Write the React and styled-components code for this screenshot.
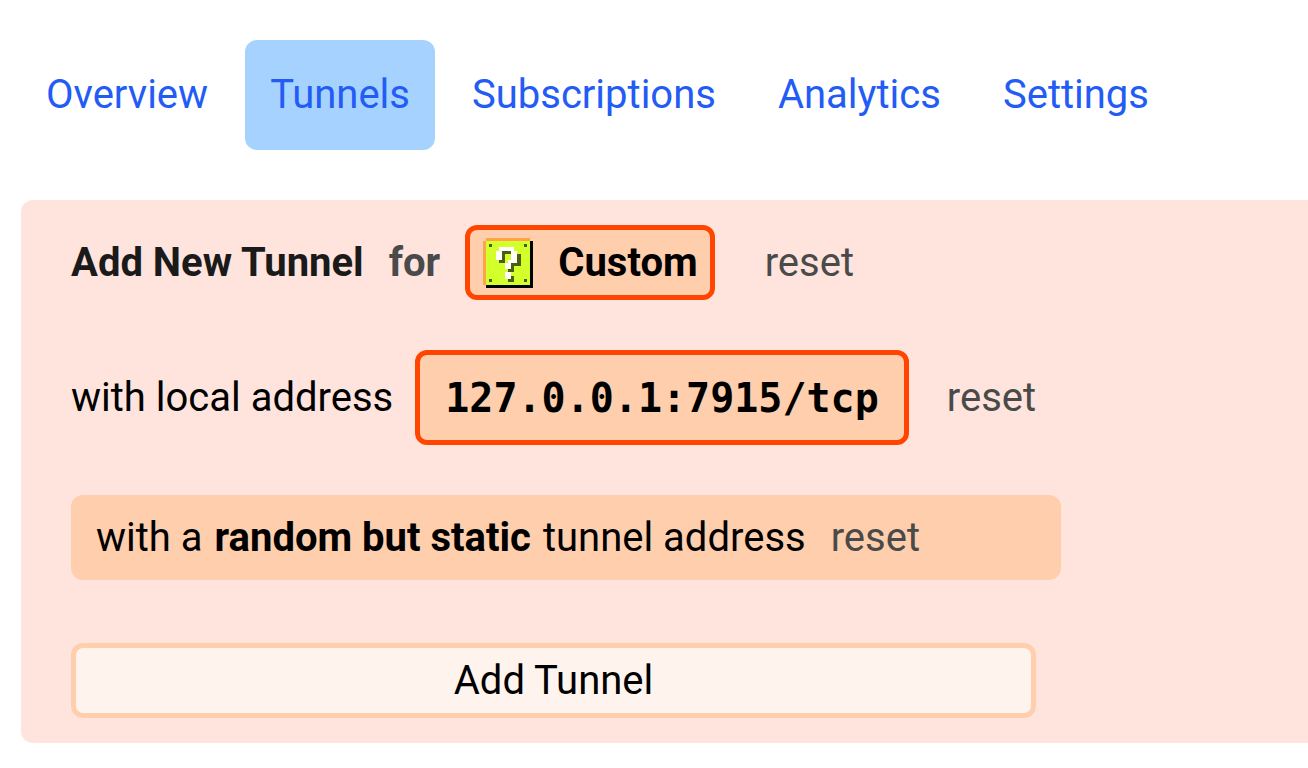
import React, { useState } from "react";
import styled, { createGlobalStyle } from "styled-components";

const TABS = ["Overview", "Tunnels", "Subscriptions", "Analytics", "Settings"];

// 16x16 pixel block: o = highlight, g = face, k = shadow, d = dark, w = white
const BLOCK_ROWS = [
  ".oooooooooooooo.",
  "oggggggggggggggk",
  "ogdggggggggggdgk",
  "oggggwwwwwgggggk",
  "ogggwwdddwwggggk",
  "ogggwwdggwwdgggk",
  "ogggwwdggwwdgggk",
  "oggggddgwwwdgggk",
  "oggggggwwdddgggk",
  "oggggggwwdgggggk",
  "ogggggggddgggggk",
  "oggggggwwggggggk",
  "oggggggwwdgggggk",
  "ogdgggggddgggdgk",
  "oggggggggggggggk",
  ".kkkkkkkkkkkkkkk",
];

const BLOCK_COLORS = {
  o: "#ffa347",
  g: "#d3ff2b",
  k: "#000000",
  d: "#4c5c10",
  w: "#ffffff",
};

const BlockIcon = () => (
  <BlockSvg viewBox="0 0 16 16" shapeRendering="crispEdges" aria-hidden="true">
    <rect x="1" y="1" width="14" height="14" fill={BLOCK_COLORS.g} />
    {BLOCK_ROWS.map((row, y) =>
      row.split("").map((cell, x) =>
        BLOCK_COLORS[cell] ? (
          <rect key={`${x}-${y}`} x={x} y={y} width="1" height="1" fill={BLOCK_COLORS[cell]} />
        ) : null
      )
    )}
  </BlockSvg>
);

const App = () => {
  const [activeTab, setActiveTab] = useState("Tunnels");

  return (
    <>
      <GlobalStyle />
      <Page>
        <Nav>
          {TABS.map((tab) => (
            <Tab
              key={tab}
              href={`#${tab.toLowerCase()}`}
              $active={tab === activeTab}
              onClick={() => setActiveTab(tab)}
            >
              {tab}
            </Tab>
          ))}
        </Nav>

        <Panel>
          <Row>
            <Title>
              Add New Tunnel <Muted>for</Muted>
            </Title>
            <TypeButton type="button">
              <BlockIcon />
              Custom
            </TypeButton>
            <ResetButton type="button" $space={50}>reset</ResetButton>
          </Row>

          <Row>
            <span>with local address</span>
            <AddressButton type="button">127.0.0.1:7915/tcp</AddressButton>
            <ResetButton type="button" $space={38}>reset</ResetButton>
          </Row>

          <AddressRow>
            <Sentence>
              with a <b>random but static</b> tunnel address
            </Sentence>
            <ResetButton type="button" $space={25}>reset</ResetButton>
          </AddressRow>

          <SubmitButton type="button">Add Tunnel</SubmitButton>
        </Panel>
      </Page>
    </>
  );
};

const GlobalStyle = createGlobalStyle`
  * {
    box-sizing: border-box;
  }

  body {
    margin: 0;
    background: #ffffff;
    color: #000000;
    font-family: Roboto, "Liberation Sans", sans-serif;
    font-size: 40px;
    line-height: 60px;
  }

  button {
    margin: 0;
    padding: 0;
    border: none;
    background: none;
    color: inherit;
    font: inherit;
    cursor: pointer;
  }
`;

const Page = styled.main`
  padding: 40px 0 25px 21px;
`;

const Nav = styled.nav`
  display: flex;
  gap: 12px;
  margin-bottom: 50px;
`;

const Tab = styled.a`
  padding: 25px;
  border-radius: 12px;
  background: ${({ $active }) => ($active ? "#a6d2ff" : "transparent")};
  color: #235cf5;
  text-decoration: none;
`;

const Panel = styled.section`
  display: flex;
  flex-direction: column;
  gap: 50px;
  padding: 25px 50px;
  border-radius: 12px 0 0 12px;
  background: #ffe4dd;
`;

const Row = styled.div`
  display: flex;
  align-items: center;
`;

const Title = styled.h1`
  display: flex;
  gap: 25px;
  margin: 0;
  color: #1a1a1a;
  font-size: 40px;
  font-weight: 700;
`;

const Muted = styled.span`
  color: #4a4a4a;
`;

const OutlinedButton = styled.button`
  border: 5px solid #ff4500;
  border-radius: 12px;
  background: #ffceac;
  font-weight: 700;
`;

const TypeButton = styled(OutlinedButton)`
  display: flex;
  align-items: center;
  gap: 25px;
  height: 75px;
  margin-left: 25px;
  padding: 0 12px 0 13px;
`;

const AddressButton = styled(OutlinedButton)`
  height: 95px;
  margin-left: 22px;
  padding: 0 25px;
  font-family: "DejaVu Sans Mono", monospace;
`;

const ResetButton = styled.button`
  margin-left: ${({ $space }) => $space}px;
  color: #4a4a4a;
`;

const AddressRow = styled(Row)`
  width: 100%;
  max-width: 990px;
  min-height: 85px;
  padding: 0 25px;
  border-radius: 12px;
  background: #ffceac;
`;

const Sentence = styled.span`
  display: flex;
  gap: 12px;

  b {
    font-weight: 700;
  }
`;

const SubmitButton = styled.button`
  width: 100%;
  max-width: 965px;
  height: 75px;
  margin-top: 13px;
  border: 5px solid #ffceac;
  border-radius: 12px;
  background: #fff3ed;
`;

const BlockSvg = styled.svg`
  width: 50px;
  height: 50px;
`;

export default App;
